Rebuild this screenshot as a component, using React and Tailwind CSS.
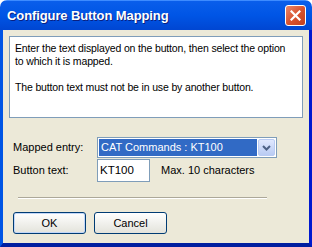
import React from 'react'

export default function App() {
  return (
    <div className="w-[312px] h-[247px] flex flex-col overflow-hidden rounded-t-[7px] font-['Liberation_Sans',Arial,sans-serif] text-[11px] text-black">
      <div className="h-[30px] shrink-0 flex items-center justify-between pl-[7px] pr-[6px] bg-gradient-to-b from-[#0A5EEB] via-[#0055E5] to-[#0046D2] border-t border-[#3D8BFF]">
        <span className="text-white font-bold text-[13px] tracking-[-0.1px] [text-shadow:1px_1px_0_#0A1F80]">Configure Button Mapping</span>
        <div className="w-[21px] h-[21px] rounded-[3px] border border-white bg-gradient-to-br from-[#E9876B] via-[#D9532F] to-[#C3401E] flex items-center justify-center">
          <svg width="11" height="11" viewBox="0 0 11 11">
            <path d="M1.5 1.5 L9.5 9.5 M9.5 1.5 L1.5 9.5" stroke="white" strokeWidth="2.2" strokeLinecap="square" />
          </svg>
        </div>
      </div>
      <div className="flex-1 flex flex-col bg-[#ECE9D8] border-l-[3px] border-l-[#0055E5] border-r-[3px] border-r-[#0019CF] border-b-[4px] border-b-[#001EA0]">
        <div className="mx-[6px] mt-[6px] h-[82px] bg-white border border-[#7F9DB9] pl-[5px] pr-[11px] pt-[5px] leading-[13px] text-[10.5px] tracking-[-0.15px]">
          <p>Enter the text displayed on the button, then select the option to which it is mapped.</p>
          <p className="mt-[13px]">The button text must not be in use by another button.</p>
        </div>
        <div className="mt-[19px] flex items-center pl-[10px]">
          <span className="w-[84px]">Mapped entry:</span>
          <div className="w-[180px] h-[21px] border border-[#7F9DB9] bg-white p-[1px] flex">
            <div className="flex-1 bg-[#316AC5] text-white flex items-center pl-[2px] text-[11px]">CAT Commands : KT100</div>
            <div className="w-[17px] ml-[1px] rounded-[2px] bg-gradient-to-b from-[#E0E8FE] to-[#B9CBF3] border border-[#B9CBF3] flex items-center justify-center">
              <svg width="9" height="6" viewBox="0 0 9 6">
                <path d="M1 1 L4.5 4.5 L8 1" stroke="#4D6185" strokeWidth="2" fill="none" />
              </svg>
            </div>
          </div>
        </div>
        <div className="mt-[1px] flex items-center pl-[10px]">
          <span className="w-[84px]">Button text:</span>
          <div className="w-[53px] h-[23px] border border-[#7F9DB9] bg-white flex items-center pl-[2px] text-[11.5px]">KT100</div>
          <span className="ml-[11px] text-[11px]">Max. 10 characters</span>
        </div>
        <div className="mt-[15px] ml-[15px] w-[249px] h-[2px] border-t border-[#ACA899] border-b border-b-white" />
        <div className="mt-[13px] flex pl-[10px] gap-[8px]">
          <button className="w-[73px] h-[22px] rounded-[3px] border border-[#003C74] bg-gradient-to-b from-white to-[#E3E3DB] shadow-[inset_0_0_0_1px_#C2D7F8] text-[11px]">OK</button>
          <button className="w-[73px] h-[22px] rounded-[3px] border border-[#003C74] bg-gradient-to-b from-white to-[#E3E3DB] text-[11px]">Cancel</button>
        </div>
      </div>
    </div>
  )
}
